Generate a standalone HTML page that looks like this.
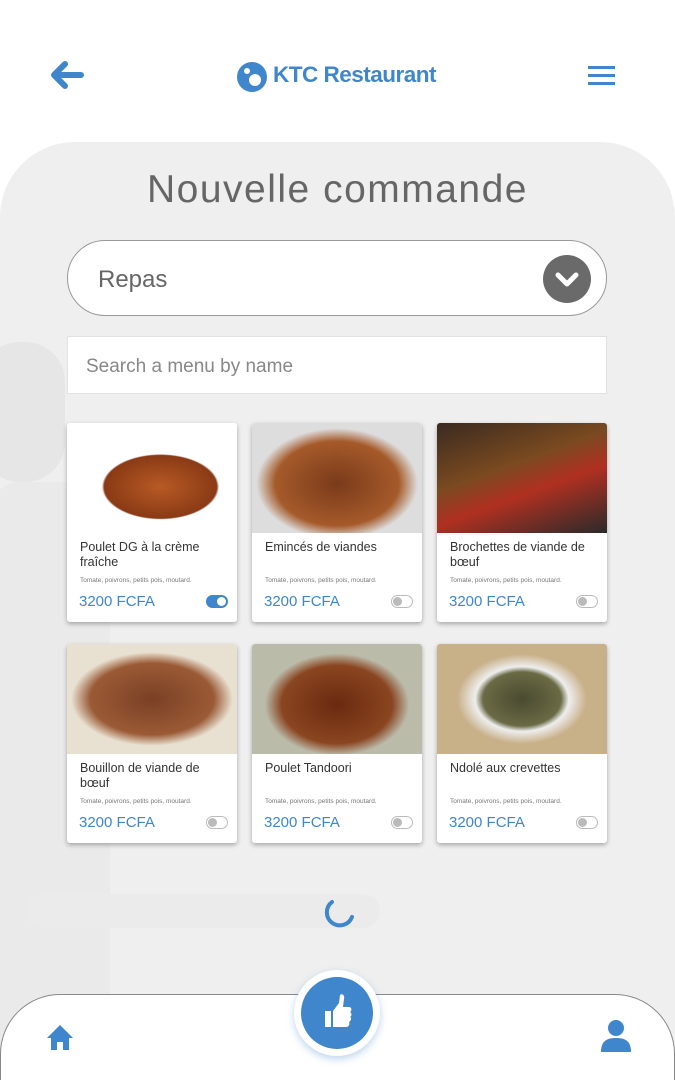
<!DOCTYPE html>
<html><head><meta charset="utf-8"><style>
*{box-sizing:border-box;margin:0;padding:0}
html,body{width:675px;height:1080px;overflow:hidden}
body{background:#fff;font-family:"Liberation Sans",sans-serif;position:relative}
.panel{position:absolute;left:0;top:142px;width:675px;height:938px;background:#efefef;border-radius:75px 75px 0 0;overflow:hidden}
.ghost{position:absolute}
h1{position:absolute;top:168px;width:675px;text-align:center;font-weight:normal;font-size:39px;color:#666;letter-spacing:1.5px}
.sel{position:absolute;left:67px;top:240px;width:540px;height:76px;border:1px solid #999;border-radius:38px;background:#fff}
.sel span{position:absolute;left:30px;top:25px;font-size:24px;color:#666}
.sel .c{position:absolute;right:15px;top:14px;width:48px;height:48px;border-radius:50%;background:#6a6a6a}
.search{position:absolute;left:67px;top:336px;width:540px;height:58px;background:#fff;border:1px solid #e2e2e2}
.search span{position:absolute;left:18px;top:19px;font-size:19px;color:#888}
.card{position:absolute;width:170px;height:199px;background:#fff;box-shadow:0 2px 5px rgba(0,0,0,.3);border-radius:3px;overflow:hidden}
.img{height:110px}
.t{position:absolute;left:13px;top:117px;font-size:12.5px;color:#333;line-height:15px;width:150px}
.d{position:absolute;left:13px;top:154px;font-size:6.5px;color:#777}
.p{position:absolute;left:12px;top:170px;font-size:15px;color:#3f86cc}
.tg{position:absolute;right:9px;top:172px;width:22px;height:13px;border-radius:7px;border:1px solid #bbb;background:#fff}
.tg i{position:absolute;left:1px;top:1px;width:9px;height:9px;border-radius:50%;background:#bbb}
.tg.on{background:#3f86cc;border-color:#3f86cc}
.tg.on i{left:10px;background:#fff}
.nav{position:absolute;left:0;top:994px;width:675px;height:100px;background:#fff;border:1px solid #888;border-radius:60px 60px 0 0}
.fab{position:absolute;left:294px;top:970px;width:86px;height:86px;border-radius:50%;background:#fff;box-shadow:0 3px 8px rgba(63,134,204,.35)}
.fab div{position:absolute;left:7px;top:7px;width:72px;height:72px;border-radius:50%;background:#3f86cc}
</style></head><body>
<svg style="position:absolute;left:50px;top:60px" width="34" height="30" viewBox="0 0 34 30"><path d="M15 4 L4 15 L15 26 M5 15 H31" stroke="#3f86cc" stroke-width="6" fill="none" stroke-linecap="round" stroke-linejoin="round"/></svg>
<svg style="position:absolute;left:236px;top:61px" width="32" height="32" viewBox="0 0 32 32"><circle cx="16" cy="16" r="15" fill="#3f86cc"/><circle cx="19" cy="19" r="6" fill="#fff"/><circle cx="11" cy="10" r="3" fill="#fff"/></svg>
<div style="position:absolute;left:273px;top:62px;font-size:22.5px;font-weight:bold;color:#3f86cc;letter-spacing:-0.5px">KTC Restaurant</div>
<div style="position:absolute;left:588px;top:66px;width:27px;height:3px;background:#3f86cc;box-shadow:0 8px 0 #3f86cc,0 16px 0 #3f86cc"></div>
<div class="panel">
<div class="ghost" style="left:-20px;top:200px;width:85px;height:140px;border-radius:40px;background:#e6e6e6"></div>
<div class="ghost" style="left:-10px;top:340px;width:120px;height:600px;border-radius:30px 50px 0 0;background:#eaeaea"></div>
<div class="ghost" style="left:25px;top:752px;width:355px;height:34px;border-radius:17px;background:#ebebeb"></div>
</div>
<h1>Nouvelle commande</h1>
<div class="sel"><span>Repas</span><div class="c"><svg width="48" height="48" viewBox="0 0 48 48"><path d="M15 20 L24 29 L33 20" stroke="#fff" stroke-width="5" fill="none" stroke-linecap="round" stroke-linejoin="round"/></svg></div></div>
<div class="search"><span>Search a menu by name</span></div>

<div class="card" style="left:67px;top:423px"><div class="img" style="background:radial-gradient(ellipse 75px 42px at 55% 58%,#b85a25,#8a3a15 75%,#fff 78%)"></div><div class="t">Poulet DG à la crème fraîche</div><div class="d">Tomate, poivrons, petits pois, moutard.</div><div class="p">3200 FCFA</div><div class="tg on"><i></i></div></div>
<div class="card" style="left:252px;top:423px"><div class="img" style="background:radial-gradient(ellipse 95px 65px at 50% 55%,#7a3a1a,#a55a2a 65%,#ddd 85%)"></div><div class="t">Emincés de viandes</div><div class="d">Tomate, poivrons, petits pois, moutard.</div><div class="p">3200 FCFA</div><div class="tg"><i></i></div></div>
<div class="card" style="left:437px;top:423px"><div class="img" style="background:linear-gradient(160deg,#3a2a20,#7a4a20 40%,#b03020 60%,#2a2a2a)"></div><div class="t">Brochettes de viande de bœuf</div><div class="d">Tomate, poivrons, petits pois, moutard.</div><div class="p">3200 FCFA</div><div class="tg"><i></i></div></div>
<div class="card" style="left:67px;top:644px"><div class="img" style="background:radial-gradient(ellipse 95px 55px at 50% 50%,#7a4025,#9a5a35 65%,#e8e0d0 85%)"></div><div class="t">Bouillon de viande de bœuf</div><div class="d">Tomate, poivrons, petits pois, moutard.</div><div class="p">3200 FCFA</div><div class="tg"><i></i></div></div>
<div class="card" style="left:252px;top:644px"><div class="img" style="background:radial-gradient(ellipse 85px 60px at 50% 55%,#6a2a10,#8a4520 65%,#bba 85%)"></div><div class="t">Poulet Tandoori</div><div class="d">Tomate, poivrons, petits pois, moutard.</div><div class="p">3200 FCFA</div><div class="tg"><i></i></div></div>
<div class="card" style="left:437px;top:644px"><div class="img" style="background:radial-gradient(ellipse 65px 45px at 50% 50%,#4a4a30,#6a6a45 60%,#eee 72%,#c8b088)"></div><div class="t">Ndolé aux crevettes</div><div class="d">Tomate, poivrons, petits pois, moutard.</div><div class="p">3200 FCFA</div><div class="tg"><i></i></div></div>

<svg style="position:absolute;left:320px;top:897px" width="36" height="36" viewBox="0 0 36 36"><path d="M12 5 A13 13 0 1 0 32 20" stroke="#3f86cc" stroke-width="4" fill="none" stroke-linecap="round"/></svg>
<div class="nav"></div>
<svg style="position:absolute;left:45px;top:1022px" width="30" height="30" viewBox="0 0 30 30"><path d="M15 3 L2 16 H6 V28 H12 V20 H18 V28 H24 V16 H28 Z" fill="#3f86cc"/></svg>
<svg style="position:absolute;left:598px;top:1018px" width="36" height="36" viewBox="0 0 36 36"><circle cx="18" cy="10" r="8" fill="#3f86cc"/><path d="M3 34 C3 22 10 20 18 20 C26 20 33 22 33 34 Z" fill="#3f86cc"/></svg>
<div class="fab"><div><svg width="72" height="72" viewBox="0 0 72 72"><rect x="24" y="34" width="6" height="16" fill="#fff"/><path d="M32 34 L38 26 L39 18 C41 16 44 18 43 22 L42 30 H48 C51 30 51 34 49 35 C51 36 51 39 49 40 C51 41 50 44 48 45 C49 47 48 50 45 50 H32 Z" fill="#fff"/></svg></div></div>
</body></html>
